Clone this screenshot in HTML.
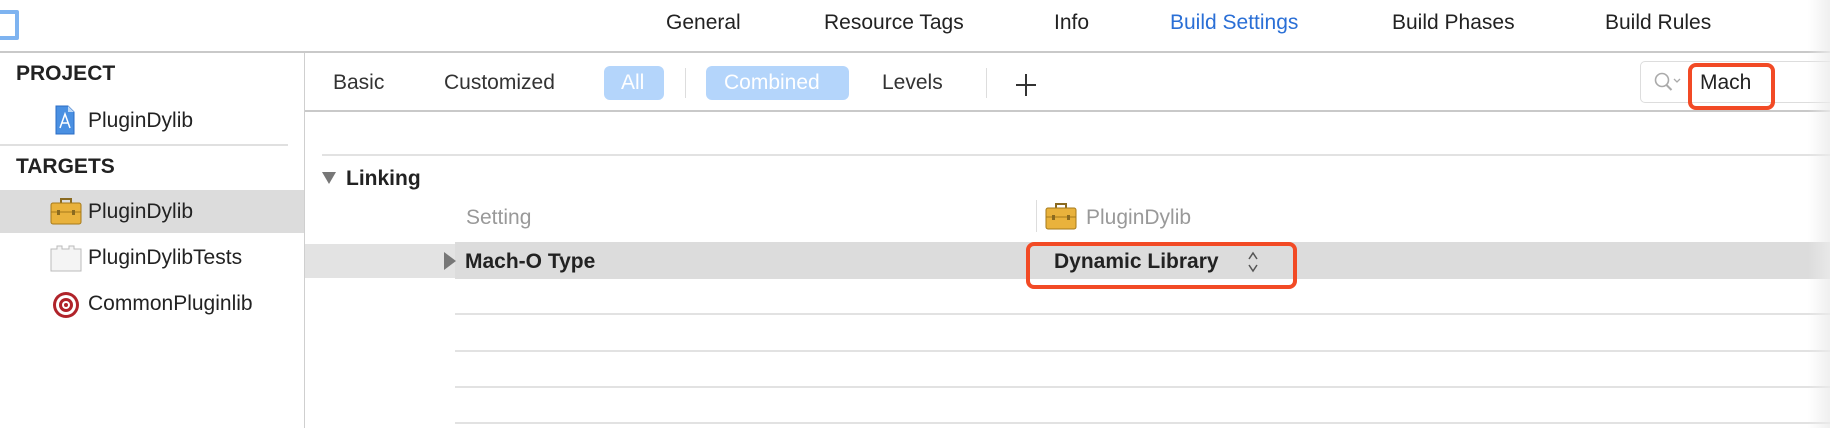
<!DOCTYPE html>
<html><head><meta charset="utf-8"><style>
*{margin:0;padding:0;box-sizing:border-box}
body{width:1830px;height:428px;overflow:hidden;background:#fff;font-family:"Liberation Sans",sans-serif;color:#222;position:relative}
.a{position:absolute;white-space:nowrap}
.t{font-size:21px;line-height:24px}
.b{font-size:21px;font-weight:bold;line-height:24px}
.hl{position:absolute;height:2px;background:#e2e2e2}
</style></head><body>
<div class="a" style="left:-4px;top:10px;width:23px;height:30px;border:4px solid #7eb3f0;border-radius:2px"></div>
<div class="a t" style="left:666px;top:11px">General</div>
<div class="a t" style="left:824px;top:11px">Resource Tags</div>
<div class="a t" style="left:1054px;top:11px">Info</div>
<div class="a t" style="left:1170px;top:11px;color:#2a6fd6">Build Settings</div>
<div class="a t" style="left:1392px;top:11px">Build Phases</div>
<div class="a t" style="left:1605px;top:11px">Build Rules</div>
<div class="a" style="left:0;top:51px;width:1830px;height:2px;background:#c9c9c9"></div>
<div class="a" style="left:304px;top:53px;width:1px;height:375px;background:#cfcfcf"></div>
<div class="a b" style="left:16px;top:62px">PROJECT</div>
<svg class="a" style="left:54px;top:104px" width="22" height="32" viewBox="0 0 22 32"><path d="M2 2h12l6 6v22H2z" fill="#4a90e2" stroke="#2b6cc4"/><path d="M14 2v6h6" fill="#bcd8f7"/><path d="M6 24l5-14 5 14M8 19h6" stroke="#fff" fill="none" stroke-width="1.5"/></svg>
<div class="a t" style="left:88px;top:109px">PluginDylib</div>
<div class="a" style="left:0;top:144px;width:288px;height:2px;background:#e0e0e0"></div>
<div class="a b" style="left:16px;top:155px">TARGETS</div>
<div class="a" style="left:0;top:190px;width:304px;height:43px;background:#dcdcdc"></div>
<svg class="a" style="left:50px;top:197px" width="32" height="28" viewBox="0 0 32 28"><path d="M11 6V2h10v4" stroke="#8a6a20" fill="none" stroke-width="2"/><rect x="1" y="6" width="30" height="21" rx="2" fill="#e9b23c" stroke="#a67a1a"/><path d="M1 15h30" stroke="#a67a1a"/><rect x="7" y="13" width="3" height="5" fill="#8a6a20"/><rect x="22" y="13" width="3" height="5" fill="#8a6a20"/></svg>
<div class="a t" style="left:88px;top:200px">PluginDylib</div>
<svg class="a" style="left:50px;top:244px" width="32" height="28" viewBox="0 0 32 28"><path d="M1 27V5h6V2h5v3h7V2h5v3h7v22z" fill="#f4f4f4" stroke="#bbb"/></svg>
<div class="a t" style="left:88px;top:246px">PluginDylibTests</div>
<svg class="a" style="left:51px;top:290px" width="30" height="30" viewBox="0 0 30 30"><circle cx="15" cy="15" r="13" fill="#b0232a"/><circle cx="15" cy="15" r="10" fill="#fff"/><circle cx="15" cy="15" r="7" fill="#b0232a"/><circle cx="15" cy="15" r="4" fill="#fff"/><circle cx="15" cy="15" r="2" fill="#b0232a"/></svg>
<div class="a t" style="left:88px;top:292px">CommonPluginlib</div>
<div class="a t" style="left:333px;top:71px;color:#333">Basic</div>
<div class="a t" style="left:444px;top:71px;color:#333">Customized</div>
<div class="a" style="left:604px;top:66px;width:60px;height:34px;background:#b4d5fb;border-radius:6px"></div>
<div class="a t" style="left:621px;top:71px;color:#fff">All</div>
<div class="a" style="left:685px;top:68px;width:1px;height:30px;background:#ddd"></div>
<div class="a" style="left:706px;top:66px;width:143px;height:34px;background:#b4d5fb;border-radius:6px"></div>
<div class="a t" style="left:724px;top:71px;color:#fff">Combined</div>
<div class="a t" style="left:882px;top:71px;color:#333">Levels</div>
<div class="a" style="left:986px;top:68px;width:1px;height:30px;background:#ddd"></div>
<div class="a" style="left:1016px;top:84px;width:20px;height:2px;background:#333"></div>
<div class="a" style="left:1025px;top:74px;width:2px;height:22px;background:#333"></div>
<div class="a" style="left:1640px;top:61px;width:200px;height:42px;border:1px solid #ddd;border-radius:5px"></div>
<svg class="a" style="left:1653px;top:71px" width="32" height="22" viewBox="0 0 32 22"><circle cx="9" cy="9" r="6.5" stroke="#aaa" stroke-width="1.6" fill="none"/><path d="M13.5 14l5 5" stroke="#aaa" stroke-width="2"/><path d="M21 8l3 3 3-3" stroke="#aaa" stroke-width="1.3" fill="none"/></svg>
<div class="a" style="left:1700px;top:71px;font-size:21px;line-height:24px">Mach</div>
<div class="a" style="left:1688px;top:63px;width:87px;height:47px;border:4px solid #f24a25;border-radius:8px"></div>
<div class="a" style="left:305px;top:110px;width:1525px;height:2px;background:#c9c9c9"></div>
<div class="hl" style="left:322px;top:154px;width:1508px"></div>
<svg class="a" style="left:322px;top:171px" width="14" height="14"><path d="M0 1h14L7 13z" fill="#777"/></svg>
<div class="a b" style="left:346px;top:167px">Linking</div>
<div class="a t" style="left:466px;top:206px;color:#999">Setting</div>
<div class="a" style="left:1036px;top:200px;width:1px;height:32px;background:#ddd"></div>
<svg class="a" style="left:1045px;top:202px" width="32" height="28" viewBox="0 0 32 28"><path d="M11 6V2h10v4" stroke="#8a6a20" fill="none" stroke-width="2"/><rect x="1" y="6" width="30" height="21" rx="2" fill="#e9b23c" stroke="#a67a1a"/><path d="M1 15h30" stroke="#a67a1a"/><rect x="7" y="13" width="3" height="5" fill="#8a6a20"/><rect x="22" y="13" width="3" height="5" fill="#8a6a20"/></svg>
<div class="a t" style="left:1086px;top:206px;color:#999">PluginDylib</div>
<div class="a" style="left:305px;top:244px;width:150px;height:34px;background:#e3e3e3"></div>
<div class="a" style="left:455px;top:242px;width:1375px;height:37px;background:#dcdcdc"></div>
<svg class="a" style="left:443px;top:252px" width="14" height="18"><path d="M1 0v18l12-9z" fill="#777"/></svg>
<div class="a b" style="left:465px;top:250px">Mach-O Type</div>
<div class="a b" style="left:1054px;top:250px">Dynamic Library</div>
<svg class="a" style="left:1247px;top:250px" width="12" height="24"><path d="M2 9l4-6 4 6M2 15l4 6 4-6" stroke="#555" stroke-width="1.5" fill="none"/></svg>
<div class="a" style="left:1026px;top:242px;width:271px;height:47px;border:4px solid #f24a25;border-radius:8px"></div>
<div class="hl" style="left:455px;top:313px;width:1375px"></div>
<div class="hl" style="left:455px;top:350px;width:1375px"></div>
<div class="hl" style="left:455px;top:386px;width:1375px"></div>
<div class="hl" style="left:455px;top:422px;width:1375px"></div>
<div class="a" style="left:1808px;top:0;width:22px;height:428px;background:linear-gradient(90deg,rgba(255,255,255,0),rgba(235,235,235,.8))"></div>
</body></html>
